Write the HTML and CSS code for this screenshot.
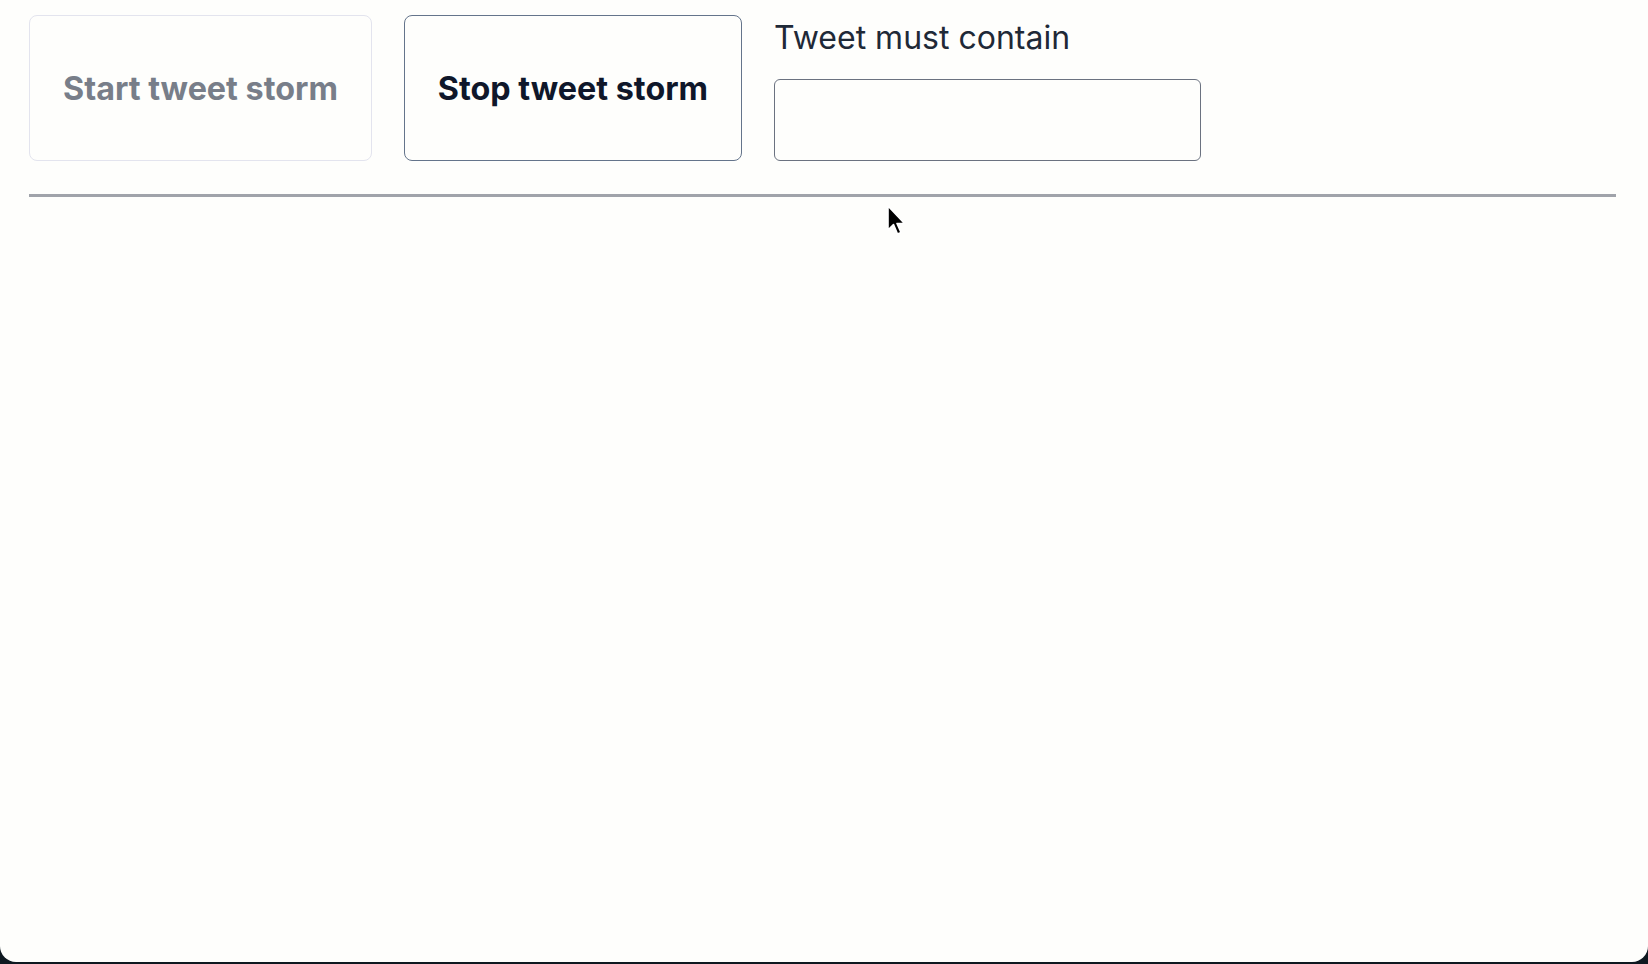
FILE: index.html
```html
<!DOCTYPE html>
<html lang="en">
<head>
<meta charset="utf-8">
<title>Tweet storm</title>
<link rel="stylesheet" href="styles.css">
</head>
<body>
<div class="window">
  <div class="controls">
    <button class="btn btn-disabled" disabled>Start tweet storm</button>
    <button class="btn btn-active">Stop tweet storm</button>
    <div class="field">
      <label class="field-label" for="contain">Tweet must contain</label>
      <input class="field-input" id="contain" type="text">
    </div>
  </div>
  <hr class="divider">
  <svg class="cursor" width="22" height="32" viewBox="0 0 22 32" aria-hidden="true">
    <path d="M2 1 L2 25 L7.5 19.5 L11.5 29 L15 27.5 L11 18.5 L18.5 18.5 Z" fill="#000" stroke="#fff" stroke-width="1.6" stroke-linejoin="round"/>
  </svg>
</div>
</body>
</html>
```

FILE: styles.css
```css
html, body {
  margin: 0;
  padding: 0;
}

body {
  background: #0e1820;
  width: 1648px;
  height: 964px;
  overflow: hidden;
  font-family: "Inter", "Liberation Sans", sans-serif;
}

.window {
  position: relative;
  height: 962px;
  background: #fefefc;
  border-radius: 0 0 16px 16px;
  padding: 15px 32px 0 29px;
  box-sizing: border-box;
}

.controls {
  display: flex;
  align-items: stretch;
  height: 146px;
  gap: 32px;
}

.btn {
  font-family: "Inter", "Liberation Sans", sans-serif;
  font-weight: 700;
  font-size: 32.3px;
  padding: 0 33px;
  background: transparent;
  border-radius: 8px;
  border: 1px solid #64748b;
  color: #0f172a;
  cursor: pointer;
}

.btn-disabled {
  border-color: #e3e4ee;
  color: #787e89;
  cursor: default;
}

.field {
  display: flex;
  flex-direction: column;
  justify-content: space-between;
  padding-top: 5px;
}

.field-label {
  font-size: 32px;
  line-height: 36px;
  color: #1f2937;
}

.field-input {
  width: 427px;
  height: 82px;
  box-sizing: border-box;
  border: 1.5px solid #6b7280;
  border-radius: 6px;
  background: transparent;
  font-family: "Inter", "Liberation Sans", sans-serif;
  font-size: 24px;
  padding: 0 16px;
  margin: 0;
}

.divider {
  margin: 33px 0 0 0;
  border: none;
  height: 3px;
  background: #a0a3aa;
}

.cursor {
  position: absolute;
  left: 886px;
  top: 205px;
}
```
